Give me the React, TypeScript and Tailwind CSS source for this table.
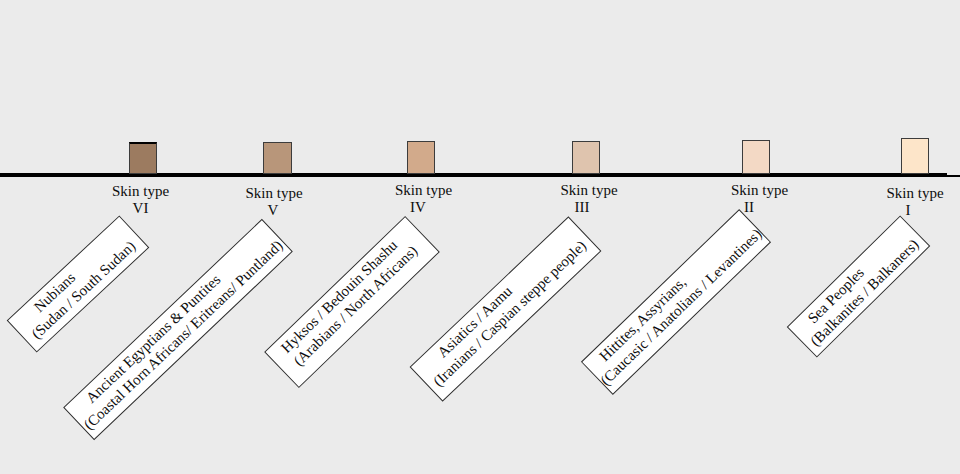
import React from 'react'

const swatches = [
  { box: 'left-[129px] top-[142px] w-[28px] h-[32px] bg-[#9c7b60] border-t-2 border-t-black', },
  { box: 'left-[263px] top-[142px] w-[29px] h-[32px] bg-[#b8967a]' },
  { box: 'left-[407px] top-[141px] w-[28px] h-[33px] bg-[#d2aa8b]' },
  { box: 'left-[572px] top-[141px] w-[28px] h-[33px] bg-[#dfc4ae]' },
  { box: 'left-[742px] top-[140px] w-[28px] h-[34px] bg-[#f3d9c5]' },
  { box: 'left-[901px] top-[138px] w-[28px] h-[36px] bg-[#fde5c9]' },
]

const labels = [
  { pos: 'left-[100.5px] top-[183px]', num: 'VI', shift: 'pr-0' },
  { pos: 'left-[234px] top-[185px]', num: 'V', shift: 'pr-[2px]' },
  { pos: 'left-[383.5px] top-[182px]', num: 'IV', shift: 'pr-[11px]' },
  { pos: 'left-[549px] top-[182px]', num: 'III', shift: 'pr-[14px]' },
  { pos: 'left-[719.5px] top-[182px]', num: 'II', shift: 'pr-[21px]' },
  { pos: 'left-[875px] top-[185px]', num: 'I', shift: 'pr-[14px]' },
]

const groups = [
  {
    box: 'left-[0.5px] top-[262px] w-[154px] h-[44px] rotate-[-43deg]',
    first: 'Nubians',
    second: '(Sudan / South Sudan)',
    indent: 'pl-[20px]',
  },
  {
    box: 'left-[40.5px] top-[306.5px] w-[274px] h-[45px] rotate-[-43.5deg]',
    first: 'Ancient Egyptians & Puntites',
    second: '(Coastal Horn Africans/ Eritreans/ Puntland)',
    indent: 'pl-[20px]',
  },
  {
    box: 'left-[254px] top-[277px] w-[196px] h-[50px] rotate-[-44deg]',
    first: 'Hyksos / Bedouin Shashu',
    second: '(Arabians / North Africans)',
    indent: 'pl-0',
  },
  {
    box: 'left-[395.5px] top-[284.5px] w-[219px] h-[48px] rotate-[-43.5deg]',
    first: 'Asiatics / Aamu',
    second: '(Iranians / Caspian steppe people)',
    indent: 'pl-[23px]',
  },
  {
    box: 'left-[566px] top-[279px] w-[220px] h-[46px] rotate-[-44deg]',
    first: 'Hittites, Assyrians,',
    second: '(Caucasic / Anatolians / Levantines)',
    indent: 'pl-[16px]',
  },
  {
    box: 'left-[778.5px] top-[264.5px] w-[159px] h-[43px] rotate-[-44.5deg]',
    first: 'Sea Peoples',
    second: '(Balkanites / Balkaners)',
    indent: 'pl-[14px]',
  },
]

export default function App() {
  return (
    <div className="relative w-[960px] h-[474px] overflow-hidden bg-[#ebebeb] text-[#0d0d0d] font-['Liberation_Serif','Times_New_Roman',serif] text-[15px]">
      {/* baseline */}
      <div className="absolute left-0 top-[173px] h-[2px] w-[947px] bg-black" />
      <div className="absolute left-0 top-[175px] h-[2px] w-full bg-black" />

      {swatches.map((s, i) => (
        <div key={i} className={`absolute border border-[#3c3c3c] ${s.box}`} />
      ))}

      {labels.map((l) => (
        <div key={l.num} className={`absolute w-[80px] text-center leading-[16.5px] ${l.pos}`}>
          <div>Skin type</div>
          <div className={l.shift}>{l.num}</div>
        </div>
      ))}

      {groups.map((g) => (
        <div
          key={g.first}
          className={`absolute flex justify-center items-start pt-[2px] bg-white border border-[#2e2e2e] origin-center ${g.box}`}
        >
          <div className="inline-block text-left leading-[18px] whitespace-nowrap">
            <div className={g.indent}>{g.first}</div>
            <div>{g.second}</div>
          </div>
        </div>
      ))}
    </div>
  )
}
